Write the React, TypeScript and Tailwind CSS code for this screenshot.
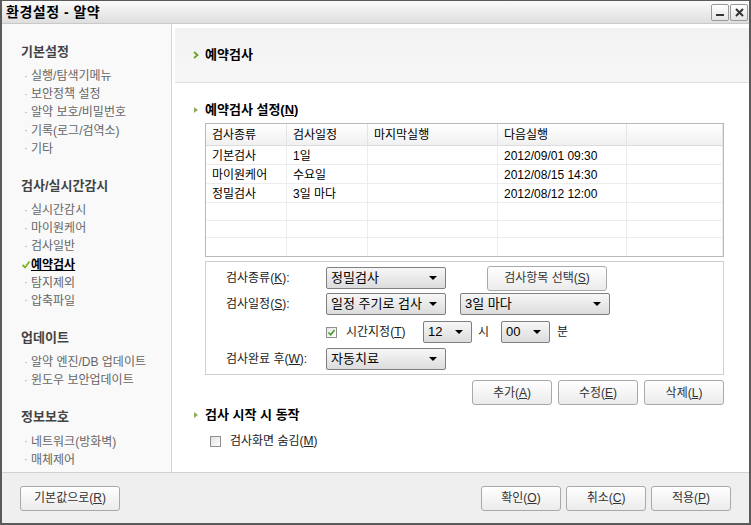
import clsx from "clsx";

const font = "font-['Liberation_Sans','Noto_Sans_CJK_KR',sans-serif]";

const sidebar = [
  { title: "기본설정", items: ["실행/탐색기메뉴", "보안정책 설정", "알약 보호/비밀번호", "기록(로그/검역소)", "기타"] },
  { title: "검사/실시간감시", items: ["실시간감시", "마이원케어", "검사일반", "예약검사", "탐지제외", "압축파일"] },
  { title: "업데이트", items: ["알약 엔진/DB 업데이트", "윈도우 보안업데이트"] },
  { title: "정보보호", items: ["네트워크(방화벽)", "매체제어"] },
];

const rows = [
  ["기본검사", "1일", "", "2012/09/01 09:30"],
  ["마이원케어", "수요일", "", "2012/08/15 14:30"],
  ["정밀검사", "3일 마다", "", "2012/08/12 12:00"],
  ["", "", "", ""],
  ["", "", "", ""],
  ["", "", "", ""],
];

const cols = ["w-[81px]", "w-[81px]", "w-[130px]", "w-[129px]", "flex-1"];

const Btn = ({ label, k, className }: { label: string; k: string; className?: string }) => {
  const [pre, post] = label.split(k);
  return (
    <button
      type="button"
      className={clsx(
        "h-[25px] rounded-[3px] border border-[#a9a9a9] bg-gradient-to-b from-white to-[#ebebeb] text-[12px] text-[#333] shadow-[inset_0_1px_0_#fff]",
        className,
      )}
    >
      {pre}
      <span className="underline">{k}</span>
      {post}
    </button>
  );
};

const Select = ({ value, className }: { value: string; className?: string }) => (
  <div
    className={clsx(
      "h-[22px] rounded-[2px] border border-[#7f7f7f] bg-gradient-to-b from-[#f7f7f7] to-[#dcdcdc] flex items-center pl-[4px] pr-[8px] text-[13px] text-black",
      className,
    )}
  >
    <span className="flex-1">{value}</span>
    <span className="w-0 h-0 border-l-[4px] border-r-[4px] border-t-[4px] border-l-transparent border-r-transparent border-t-black" />
  </div>
);

const Label = ({ text, k }: { text: string; k: string }) => {
  const [pre, post] = text.split(k);
  return (
    <span className="w-[100px] text-[12px] text-[#222]">
      {pre}
      <span className="underline">{k}</span>
      {post}
    </span>
  );
};

const Tri = () => (
  <span className="w-0 h-0 border-t-[3px] border-b-[3px] border-l-[4px] border-t-transparent border-b-transparent border-l-[#8fae5a]" />
);

export default function App() {
  return (
    <div className={clsx("w-[751px] h-[525px] flex flex-col border-x-2 border-b-2 border-t border-[#5a5a5a] bg-[#efefef] overflow-hidden", font)}>
      {/* title bar */}
      <div className="h-[23px] flex items-center justify-between bg-gradient-to-b from-[#fbfbfb] to-[#dedede] border-b border-[#c9c9c9] pl-[4px] pr-[1px]">
        <span className="text-[14px] font-bold text-black tracking-[0.5px]">환경설정 - 알약</span>
        <div className="flex gap-[1px]">
          <div className="w-[18px] h-[17px] border border-[#9a9a9a] rounded-[2px] bg-gradient-to-b from-white to-[#e4e4e4] flex items-end justify-center pb-[4px]">
            <span className="w-[8px] h-[2px] bg-[#333]" />
          </div>
          <div className="w-[18px] h-[17px] border border-[#9a9a9a] rounded-[2px] bg-gradient-to-b from-white to-[#e4e4e4] flex items-center justify-center">
            <svg width="9" height="9" viewBox="0 0 9 9">
              <path d="M1 1L8 8M8 1L1 8" stroke="#333" strokeWidth="2" />
            </svg>
          </div>
        </div>
      </div>

      <div className="flex h-[448px]">
        {/* sidebar */}
        <div className="w-[170px] bg-[#f9f9f9] border-r border-[#d6d6d6] pl-[19px] pt-[19px]">
          {sidebar.map((g) => (
            <div key={g.title} className="mb-[19px]">
              <div className="text-[13px] font-bold text-[#444] h-[18px] leading-[18px] mb-[6px]">{g.title}</div>
              {g.items.map((it) => {
                const active = it === "예약검사";
                return (
                  <div key={it} className="h-[18.2px] flex items-center text-[12px] text-[#666]">
                    {active ? (
                      <svg width="8" height="8" viewBox="0 0 8 8" className="mx-[1px]">
                        <path d="M0.5 4L3 6.5L7.5 0.5" stroke="#7cb518" strokeWidth="1.8" fill="none" />
                      </svg>
                    ) : (
                      <span className="w-[10px] text-center text-[#999] text-[10px]">·</span>
                    )}
                    <span className={clsx(active && "font-bold text-black underline")}>{it}</span>
                  </div>
                );
              })}
            </div>
          ))}
        </div>

        {/* content */}
        <div className="flex-1 bg-white flex flex-col">
          <div className="mt-[4px] ml-[3px] h-[55px] bg-gradient-to-b from-[#f2f2f2] to-[#f7f7f7] border-b border-[#dedede] flex items-center pl-[18px] gap-[6px]">
            <svg width="6" height="8" viewBox="0 0 6 8">
              <path d="M1 1L4.5 4L1 7" stroke="#6fa02a" strokeWidth="1.8" fill="none" />
            </svg>
            <span className="text-[13px] font-bold text-black">예약검사</span>
          </div>

          <div className="pl-[22px] pr-[25px]">
            <div className="flex items-center gap-[7px] mt-[18px] h-[18px]">
              <Tri />
              <span className="text-[13px] font-bold text-black">
                예약검사 설정(<span className="underline">N</span>)
              </span>
            </div>

            {/* table */}
            <div className="ml-[11px] mt-[4px] h-[134px] border border-[#b9b9b9] flex flex-col">
              <div className="h-[22px] flex bg-gradient-to-b from-white to-[#f0f0f0] border-b border-[#dcdcdc]">
                {["검사종류", "검사일정", "마지막실행", "다음실행", ""].map((h, i) => (
                  <div key={i} className={clsx(cols[i], "border-r border-[#e4e4e4] pl-[6px] pt-[1px] text-[12px] text-black leading-[21px]")}>
                    {h}
                  </div>
                ))}
              </div>
              {rows.map((r, ri) => (
                <div key={ri} className="h-[19px] flex border-b border-[#ececec] last:border-b-0">
                  {[...r, ""].map((c, i) => (
                    <div key={i} className={clsx(cols[i], "border-r border-[#ececec] pl-[6px] pt-[1px] text-[12px] text-black leading-[18px]")}>
                      {c}
                    </div>
                  ))}
                </div>
              ))}
            </div>

            {/* form */}
            <div className="ml-[11px] mt-[4px] h-[114px] border border-[#cfcfcf] pl-[20px] pt-[5px] flex flex-col">
              <div className="flex items-center h-[22px]">
                <Label text="검사종류(K):" k="K" />
                <Select value="정밀검사" className="w-[120px]" />
                <Btn label="검사항목 선택(S)" k="S" className="ml-[41px] w-[120px] h-[23px]" />
              </div>
              <div className="flex items-center h-[22px] mt-[4px]">
                <Label text="검사일정(S):" k="S" />
                <Select value="일정 주기로 검사" className="w-[120px]" />
                <Select value="3일 마다" className="ml-[14px] w-[150px]" />
              </div>
              <div className="flex items-center h-[22px] mt-[6px] pl-[100px] text-[12px] text-[#222]">
                <span className="w-[11px] h-[11px] border border-[#8e8f8f] bg-gradient-to-br from-[#e6e6e6] to-white flex items-center justify-center">
                  <svg width="7" height="7" viewBox="0 0 7 7">
                    <path d="M0.5 3.5L2.7 5.7L6.5 1" stroke="#4aa02c" strokeWidth="1.6" fill="none" />
                  </svg>
                </span>
                <span className="ml-[9px] w-[77px]">
                  시간지정(<span className="underline">T</span>)
                </span>
                <Select value="12" className="w-[49px]" />
                <span className="pl-[6px] w-[29px]">시</span>
                <Select value="00" className="w-[49px]" />
                <span className="ml-[7px]">분</span>
              </div>
              <div className="flex items-center h-[22px] mt-[5px]">
                <Label text="검사완료 후(W):" k="W" />
                <Select value="자동치료" className="w-[120px]" />
              </div>
            </div>

            <div className="flex justify-end gap-[6px] mt-[5px] mr-[0px]">
              <Btn label="추가(A)" k="A" className="w-[80px]" />
              <Btn label="수정(E)" k="E" className="w-[80px]" />
              <Btn label="삭제(L)" k="L" className="w-[80px]" />
            </div>

            <div className="flex items-center gap-[7px] mt-[1px] h-[18px]">
              <Tri />
              <span className="text-[13px] font-bold text-black">검사 시작 시 동작</span>
            </div>
            <div className="flex items-center mt-[8px] ml-[16px] text-[12px] text-[#222]">
              <span className="w-[11px] h-[11px] border border-[#8e8f8f] bg-gradient-to-br from-[#e2e2e2] to-white" />
              <span className="ml-[9px]">
                검사화면 숨김(<span className="underline">M</span>)
              </span>
            </div>
          </div>
        </div>
      </div>

      {/* bottom */}
      <div className="flex-1 border-t border-[#d2d2d2] flex items-center pl-[18px] pr-[18px]">
        <Btn label="기본값으로(R)" k="R" className="w-[100px]" />
        <div className="flex-1" />
        <div className="flex gap-[5px]">
          <Btn label="확인(O)" k="O" className="w-[80px]" />
          <Btn label="취소(C)" k="C" className="w-[80px]" />
          <Btn label="적용(P)" k="P" className="w-[80px]" />
        </div>
      </div>
    </div>
  );
}
